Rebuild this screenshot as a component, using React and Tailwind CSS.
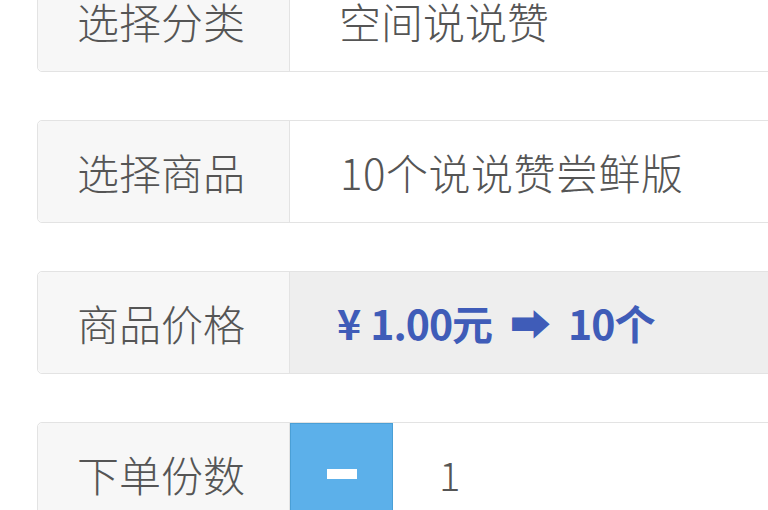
import React from 'react';

const font = { fontFamily: '"Noto Sans CJK SC", "Noto Sans", sans-serif' };

function Row({ label, children, valueClass = 'bg-white' }) {
  return (
    <div className="flex h-[103px] w-[800px] rounded-l-[5px] border border-[#e3e3e3]">
      <div className="flex w-[252px] shrink-0 items-center rounded-l-[5px] border-r border-[#e3e3e3] bg-[#f7f7f7] pl-[39px] text-[42px] font-light text-[#555]">
        {label}
      </div>
      <div className={`flex flex-1 items-center ${valueClass}`}>{children}</div>
    </div>
  );
}

export default function App() {
  return (
    <div className="h-[510px] w-[768px] overflow-hidden bg-white" style={font}>
      <div className="-mt-[31px] ml-[37px] flex flex-col gap-[48px]">
        <Row label="选择分类">
          <span className="pl-[49px] text-[42px] font-light text-[#555]">空间说说赞</span>
        </Row>
        <Row label="选择商品">
          <span className="pl-[50px] text-[42px] font-light tracking-[0.5px] text-[#555]">10个说说赞尝鲜版</span>
        </Row>
        <Row label="商品价格" valueClass="bg-[#eeeeee]">
          <span className="pl-[47px] text-[41px] font-bold tracking-[-1px] text-[#3f5cb8]">
            <span className="mr-[10px]">¥</span>1.00元<span className="px-[18px]">➡</span>10个
          </span>
        </Row>
        <Row label="下单份数">
          <button className="flex h-full w-[103px] items-center justify-center border border-[#4a9fd6] bg-[#5cb0ea]">
            <span className="block h-[10px] w-[30px] bg-white" />
          </button>
          <span className="pl-[46px] text-[40px] font-light text-[#555]">1</span>
        </Row>
      </div>
    </div>
  );
}
